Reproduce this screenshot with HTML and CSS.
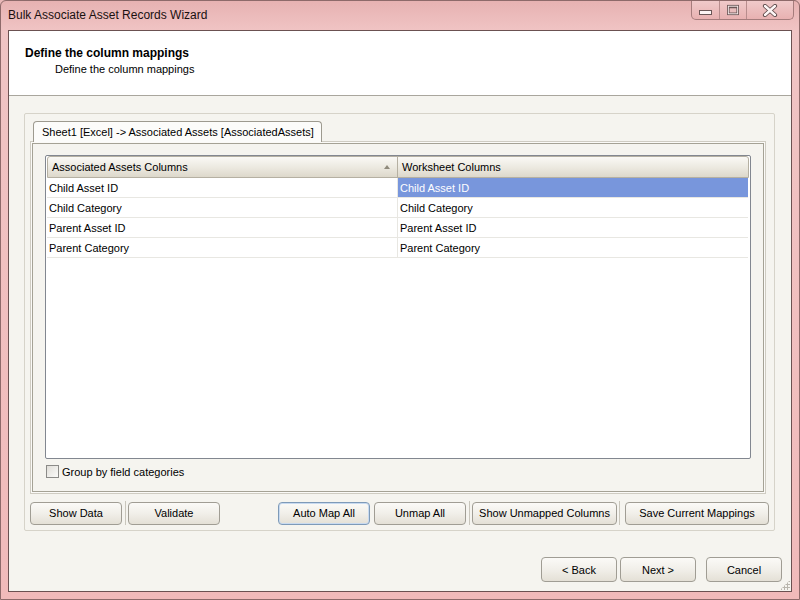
FILE: index.html
```html
<html>

<head>
    <link rel="stylesheet" href="styles.css">
</head>

<body>
    <div class="window">
        <div class="titlebar">
            <div class="title">Bulk Associate Asset Records Wizard</div>
            <div class="controls">
                <div class="ctl min"><span class="min-glyph"></span></div>
                <div class="ctl max"><span class="max-glyph"></span></div>
                <div class="ctl close">
                    <svg width="16" height="13" viewBox="0 0 16 13">
                        <path d="M3 2 L13 11 M13 2 L3 11" stroke="#5e4a4a" stroke-width="4.2" stroke-linecap="round"/>
                        <path d="M3 2 L13 11 M13 2 L3 11" stroke="#fdf6f6" stroke-width="2.4" stroke-linecap="round"/>
                    </svg>
                </div>
            </div>
        </div>
        <div class="client">
            <div class="header">
                <div class="head-title">Define the column mappings</div>
                <div class="head-sub">Define the column mappings</div>
            </div>
            <div class="body">
                <div class="group">
                    <div class="tabs">
                        <div class="tab">Sheet1 [Excel] -&gt; Associated Assets [AssociatedAssets]</div>
                    </div>
                    <div class="panel">
                        <div class="grid">
                            <div class="grid-head">
                                <div class="hcell first">Associated Assets Columns <span class="sort"></span></div>
                                <div class="hcell">Worksheet Columns</div>
                            </div>
                            <div class="grid-row">
                                <div class="cell first">Child Asset ID</div>
                                <div class="cell selected">Child Asset ID</div>
                            </div>
                            <div class="grid-row">
                                <div class="cell first">Child Category</div>
                                <div class="cell">Child Category</div>
                            </div>
                            <div class="grid-row">
                                <div class="cell first">Parent Asset ID</div>
                                <div class="cell">Parent Asset ID</div>
                            </div>
                            <div class="grid-row">
                                <div class="cell first">Parent Category</div>
                                <div class="cell">Parent Category</div>
                            </div>
                        </div>
                        <div class="check-row">
                            <span class="checkbox"></span>
                            <span>Group by field categories</span>
                        </div>
                    </div>
                    <div class="actions">
                        <button class="btn w92 g3">Show Data</button>
                        <span class="sep g2"></span>
                        <button class="btn w92">Validate</button>
                        <span class="spacer"></span>
                        <button class="btn w92 g4 focused">Auto Map All</button>
                        <button class="btn w92 g3">Unmap All</button>
                        <span class="sep g2"></span>
                        <button class="btn w145 g2">Show Unmapped Columns</button>
                        <span class="sep g5"></span>
                        <button class="btn w144">Save Current Mappings</button>
                    </div>
                </div>
            </div>
            <div class="footer">
                <button class="btn nav">&lt; Back</button>
                <button class="btn nav">Next &gt;</button>
                <button class="btn nav cancel">Cancel</button>
                <span class="grip"></span>
            </div>
        </div>
    </div>
</body>

</html>
```

FILE: styles.css
```css
body{
    margin: 0;
    background: #e9b8b8;
    font-family: "Liberation Sans", Arial, sans-serif;
    font-size: 11px;
    color: #000;
}

.window{
    width: 800px;
    height: 600px;
    box-sizing: border-box;
    padding: 0 7px 7px 7px;
    display: flex;
    flex-direction: column;
    background: linear-gradient(to bottom, #e7b2b2 0px, #f0c4c4 30px, #f1baba 600px);
    border: 1px solid #8e6a6a;
    border-radius: 6px 6px 0 0;
}

.titlebar{
    height: 29px;
    display: flex;
    flex-direction: row;
    justify-content: space-between;
    align-items: flex-start;
}

.title{
    font-size: 12px;
    padding: 7px 0 0 0;
    color: #1a1010;
}

.controls{
    display: flex;
    flex-direction: row;
    margin-right: -2px;
    border: 1px solid #a57c7c;
    border-top: none;
    border-radius: 0 0 5px 5px;
    height: 18px;
    background: linear-gradient(to bottom, #f0caca, #e8b1b1);
    overflow: hidden;
}

.ctl{
    display: flex;
    align-items: center;
    justify-content: center;
    border-left: 1px solid #b88d8d;
}

.ctl.min{
    width: 27px;
    border-left: none;
}

.ctl.max{
    width: 26px;
}

.ctl.close{
    width: 46px;
}

.min-glyph{
    width: 11px;
    height: 3px;
    margin-top: 5px;
    background: #fdf4f4;
    border: 1px solid #6a5656;
}

.max-glyph{
    width: 8px;
    height: 5px;
    border: 1px solid #6a5656;
    outline: 1px solid #fdf4f4;
    border-top-width: 2px;
    background: #e9bcbc;
    box-shadow: 0 0 0 2px #6a5656;
    transform: scale(0.85);
}

.client{
    flex: 1;
    display: flex;
    flex-direction: column;
    background: #f5f4ef;
    border: 1px solid #6b5151;
}

.header{
    height: 65px;
    background: #fff;
    border-bottom: 1px solid #a9a69d;
    box-sizing: border-box;
    padding: 15px 0 0 16px;
}

.head-title{
    font-weight: bold;
    font-size: 12px;
}

.head-sub{
    padding: 3px 0 0 30px;
}

.body{
    padding: 17px 16px 0 15px;
}

.group{
    height: 418px;
    box-sizing: border-box;
    border: 1px solid #d6d3c9;
    border-radius: 2px;
    padding: 7px 8px 0 5px;
    display: flex;
    flex-direction: column;
}

.tabs{
    display: flex;
    flex-direction: row;
    padding-left: 3px;
    height: 20px;
    position: relative;
    z-index: 1;
}

.tab{
    height: 21px;
    box-sizing: border-box;
    border: 1px solid #9d9a8f;
    border-bottom: none;
    border-radius: 4px 4px 0 0;
    background: #fcfcfa;
    padding: 4px 7px 0 8px;
}

.panel{
    height: 353px;
    box-sizing: border-box;
    border: 1px solid #cfccc2;
    box-shadow: inset 0 0 0 1px #fbfaf7, inset 0 0 0 2px #a5a295;
    background: #f5f4ef;
    padding: 13px 14px 0 14px;
    display: flex;
    flex-direction: column;
}

.grid{
    height: 304px;
    box-sizing: border-box;
    background: #fff;
    border: 1px solid #828790;
    border-radius: 2px;
    padding: 0 1px 1px 1px;
}

.grid-head{
    display: flex;
    flex-direction: row;
    height: 22px;
    border: 1px solid #b5b0a2;
    border-radius: 3px 3px 0 0;
    background: linear-gradient(to bottom, #faf9f5 0%, #ebe8df 55%, #ddd8cb 100%);
    box-sizing: border-box;
}

.hcell{
    display: flex;
    align-items: center;
    padding-left: 4px;
    box-sizing: border-box;
    position: relative;
}

.hcell.first{
    width: 350px;
    border-right: 1px solid #b5b0a2;
}

.hcell + .hcell{
    flex: 1;
}

.sort{
    position: absolute;
    right: 7px;
    top: 8px;
    width: 0;
    height: 0;
    border-left: 3px solid transparent;
    border-right: 3px solid transparent;
    border-bottom: 4px solid #8f8a7c;
}

.grid-row{
    display: flex;
    flex-direction: row;
    height: 20px;
    border-bottom: 1px solid #e8e7e2;
    box-sizing: border-box;
    margin-right: 1px;
}

.cell{
    display: flex;
    align-items: center;
    padding-left: 2px;
    box-sizing: border-box;
}

.cell.first{
    width: 351px;
    border-right: 1px solid #e8e7e2;
}

.cell + .cell{
    flex: 1;
}

.cell.selected{
    background: #7896dc;
    color: #fdfdff;
}

.check-row{
    display: flex;
    align-items: center;
    padding: 6px 0 0 1px;
    gap: 3px;
}

.checkbox{
    width: 13px;
    height: 13px;
    box-sizing: border-box;
    border: 1px solid #8b8b88;
    background: linear-gradient(135deg, #e0ded8, #fbfbf9);
}

.actions{
    display: flex;
    flex-direction: row;
    align-items: center;
    padding-top: 7px;
}

.actions > *{
    flex-shrink: 0;
}

.btn{
    height: 23px;
    font-family: "Liberation Sans", Arial, sans-serif;
    font-size: 11px;
    color: #000;
    border: 1px solid #a09d94;
    border-radius: 4px;
    background: linear-gradient(to bottom, #fbfaf7 0%, #f1efe9 50%, #e4e0d6 100%);
    padding: 0;
    margin: 0;
}

.btn.w92{
    width: 92px;
}

.btn.w145{
    width: 145px;
}

.btn.w144{
    width: 144px;
}

.g2{
    margin-right: 2px;
}

.g3{
    margin-right: 3px;
}

.g4{
    margin-right: 4px;
}

.g5{
    margin-right: 5px;
}

.btn.focused{
    border-color: #7e9ab8;
    box-shadow: inset 0 0 0 1px #c8daf0;
}

.sep{
    width: 1px;
    height: 24px;
    background: #c9c6bc;
}

.spacer{
    width: 58px;
}

.footer{
    flex: 1;
    margin-top: 16px;
    display: flex;
    flex-direction: row;
    justify-content: flex-end;
    align-items: flex-start;
    padding: 10px 9px 0 0;
    position: relative;
}

.btn.nav{
    width: 76px;
    height: 25px;
    margin: 0 0 0 3px;
}

.btn.cancel{
    margin-left: 10px;
}

.grip{
    position: absolute;
    right: 1px;
    bottom: 1px;
    width: 10px;
    height: 10px;
    background: radial-gradient(circle, #b9b6ad 1px, transparent 1.2px) 0 0 / 3px 3px;
    clip-path: polygon(100% 0, 100% 100%, 0 100%);
}
```
